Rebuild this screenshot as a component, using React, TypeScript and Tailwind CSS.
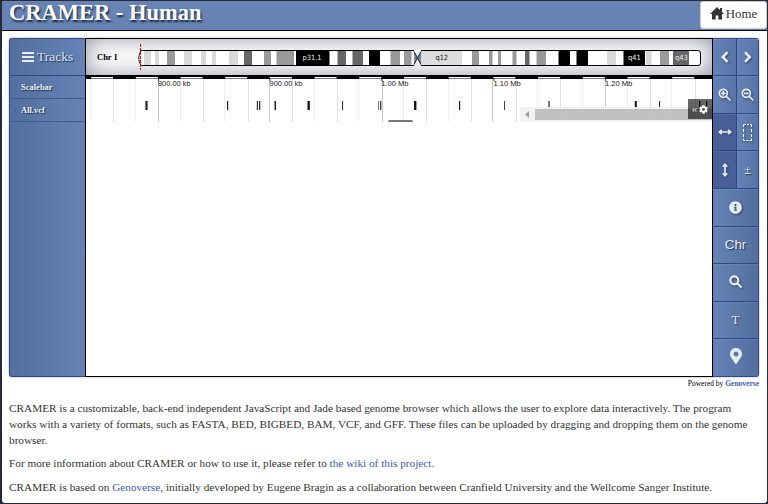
import React from "react";
import { FaInfoCircle, FaMapMarkerAlt, FaCog } from "react-icons/fa";

const SANS = '"Liberation Sans", Arial, sans-serif';

// Ideogram bands: start, end, stain colour
const bands: [number, number, string][] = [
  [144, 151, "#d9d9d9"], [155, 159, "#d9d9d9"], [167, 175, "#999"], [184, 192, "#d9d9d9"],
  [201, 206, "#d9d9d9"], [212, 216, "#d9d9d9"], [229, 238, "#d9d9d9"], [244, 252, "#666"],
  [264, 271, "#999"], [276.5, 294, "#999"], [296, 329.5, "#000"], [337.5, 346, "#666"],
  [352.5, 363, "#666"], [369, 380, "#000"], [390.5, 400, "#999"], [404, 411.5, "#999"],
  [421, 462, "#ddd"], [472, 479, "#999"], [489, 492.5, "#999"], [498, 501, "#999"],
  [512.5, 516.5, "#999"], [525, 529.5, "#666"], [536.5, 546, "#999"], [558.5, 570, "#000"],
  [576.5, 588, "#000"], [607, 616, "#d9d9d9"], [623.5, 645, "#000"], [646, 651.5, "#d9d9d9"],
  [660, 669, "#999"], [673, 689, "#666"],
];

// Variants: position, width, colour
const variants: [number, number, string][] = [
  [145.4, 2.2, "#222"], [227, 1.2, "#222"], [256.8, 1.2, "#333"], [259, 1.3, "#333"], [274.5, 1.5, "#222"],
  [307.5, 2.3, "#111"], [342, 1.1, "#333"], [378, 1, "#777"], [380, 1.4, "#444"], [414, 2.4, "#111"],
  [459, 1.2, "#222"], [504, 1, "#444"], [548.4, 1.3, "#333"], [634.8, 2, "#111"], [659, 1.1, "#333"],
  [699, 1.4, "#111"], [706, 1.2, "#111"],
];

const STEP = 22.35;
const lines = Array.from({ length: 28 }, (_, i) => 91.1 + i * STEP);
const labels: [number, string, number][] = [
  [158, "800.00 kb", 32.5], [269.5, "900.00 kb", 32.8], [381.2, "1.00 Mb", 27.3], [493.5, "1.10 Mb", 27.3], [605, "1.20 Mb", 27.3],
];

function Ideogram() {
  return (
    <svg width="626" height="36" viewBox="86 39 626 36" className="block" style={{ fontFamily: '"DejaVu Sans", sans-serif' }}>
      <path d="M141 51H414L417.5 58L414 65H141Q136.500 58 141 51Z" fill="#fff" />
      <path d="M421 51H698Q700.500 51 700.500 54V62Q700.500 65 698 65H421L417.500 58Z" fill="#fff" />
      {bands.map(([a, b, c]) => <rect key={a} x={a} y="51" width={b - a} height="14" fill={c} />)}
      <path d="M414 51L417.500 57.500L421 51V65L417.500 58.500L414 65Z" fill="#708aac" />
      <path d="M141 50.5H414M141 65.500H414M421 50.500H698Q700.500 50.500 700.500 53V63Q700.500 65.500 698 65.500H421" fill="none" stroke="#000" />
      <path d="M141 50.500Q136.500 58 141 65.500M414 51.500L421 64.500M421 51.500L414 64.500" fill="none" stroke="#222" />
      <path d="M140.500 44V70" stroke="#f00" strokeWidth="1" strokeDasharray="3 1" />
      <text x="97" y="60" fontSize="8.500" fontWeight="bold" style={{ fontFamily: '"Liberation Serif", serif' }}>Chr 1</text>
      <g fontSize="7.200" fill="#eee" lengthAdjust="spacingAndGlyphs">
        <text x="302.500" y="60" textLength="19" lengthAdjust="spacingAndGlyphs">p31.1</text>
        <text x="435.500" y="60" fill="#111" textLength="12.500" lengthAdjust="spacingAndGlyphs">q12</text>
        <text x="628" y="60" textLength="12.800" lengthAdjust="spacingAndGlyphs">q41</text>
        <text x="675" y="60" textLength="12.800" lengthAdjust="spacingAndGlyphs">q43</text>
      </g>
    </svg>
  );
}

function Tracks() {
  return (
    <svg width="626" height="47" viewBox="86 75 626 47" className="block" style={{ fontFamily: SANS }}>
      <rect x="86" y="75" width="626" height="47" fill="#fff" />
      {lines.map((x, i) => (
        <rect key={x} x={Math.round(x) - (i % 2 ? 0 : 1)} y="79" width="1" height="43" fill={i % 5 === 3 ? "#c8c8c8" : i % 2 ? "#e1e1e1" : "#eee"} />
      ))}
      <rect x="86" y="75" width="626" height="4" fill="#000" />
      {lines.filter((_, i) => i % 2 === 0).map((x) => (
        <g key={x}>
          <rect x={x} y="77" width="22" height="1" fill="#fff" />
          <rect x={x} y="78" width="22" height="1" fill="#777" />
        </g>
      ))}
      {labels.map(([x, t, w]) => (
        <g key={t}>
          <path d={`M${x + 0.5} 79V81`} stroke="#333" />
          <text x={x} y="86" fontSize="8" fill="#222" textLength={w} lengthAdjust="spacingAndGlyphs">{t}</text>
        </g>
      ))}
      {variants.map(([x, w, c]) => <rect key={x} x={x} y="101" width={w} height="9" fill={c} />)}
      <rect x="388" y="120" width="25" height="4" rx="1.500" fill="#777" />
      <g opacity=".93">
        <rect x="520" y="107" width="192" height="15" fill="#f1f1f1" />
        <rect x="535" y="109" width="177" height="11" fill="#bdbdbd" />
        <path d="M529 111V118L525 114.500Z" fill="#999" />
      </g>
    </svg>
  );
}

function Stroke({ d, w = 2, size = 14 }: { d: string; w?: number; size?: number }) {
  return (
    <svg width={size} height={size} viewBox="0 0 14 14" fill="none" stroke="currentColor" strokeWidth={w}>
      <path d={d} />
    </svg>
  );
}

function Btn({ children, col, on, h = "h-[37.500px]" }: { children: React.ReactNode; col?: "left" | "right"; on?: boolean; h?: string }) {
  const width = col === "left" ? "w-[24px]" : col === "right" ? "w-[22px]" : "w-full";
  return (
    <div
      className={`flex ${h} ${width} items-center justify-center border-r border-b border-[#304789] ${
        on ? "bg-[#485f98]" : col ? "bg-linear-to-r from-[#6482b5] to-[#5875a8]" : "bg-linear-to-r from-[#6583b5] to-[#526f9e]"
      } text-[#e5ebf5] shadow-[inset_0_1px_0_rgba(255,255,255,0.08)] [text-shadow:1px_1px_1px_#28364f] [&>svg]:shrink-0 [&>svg]:drop-shadow-[1px_1px_1px_#34486d]`}
    >
      {children}
    </div>
  );
}

const magnifier = "M9.300 5.300A4 4 0 1 1 1.300 5.300A4 4 0 1 1 9.300 5.300M8.300 8.300L12.500 12.500";

function Controls() {
  return (
    <div className="w-[46px] shrink-0 overflow-hidden rounded-r-[3px] border-t border-[#304789]">
      <div className="flex">
        <Btn col="left" h="h-[37px]"><Stroke d="M9.500 2.200L4.800 7L9.500 11.800" w={2.6} /></Btn>
        <Btn col="right" h="h-[37px]"><Stroke d="M4 2.200L8.700 7L4 11.800" w={2.6} /></Btn>
      </div>
      <div className="flex">
        <Btn col="left" h="h-[38px]"><Stroke d={magnifier + "M3 5.300H7.600M5.300 3V7.600"} w={1.7} /></Btn>
        <Btn col="right" h="h-[38px]"><Stroke d={magnifier + "M3 5.300H7.600"} w={1.7} /></Btn>
      </div>
      <div className="flex">
        <Btn col="left" on h="h-[37px]"><Stroke d="M1.500 7H12.500M3.800 4.800L1.300 7L3.800 9.200M10.200 4.800L12.700 7L10.200 9.200" w={1.7} /></Btn>
        <Btn col="right" h="h-[37px]">
          <svg width="9" height="17" viewBox="0 0 9 17" fill="none" stroke="#fff" strokeWidth="1">
            <path d="M0.500 3V0.500H3M4 0.500H6M7 0.500H8.500V3M0.500 5V8M8.500 5V8M0.500 10V13M8.500 10V13M0.500 14.500V16.500H2M3 16.500H5.500M6.500 16.500H8.500V14.500" />
          </svg>
        </Btn>
      </div>
      <div className="flex">
        <Btn col="left" on h="h-[38px]"><Stroke d="M7 1.500V12.500M4.800 3.800L7 1.300L9.200 3.800M4.800 10.200L7 12.700L9.200 10.200" w={1.7} /></Btn>
        <Btn col="right" h="h-[38px]"><span className="text-[13px]">±</span></Btn>
      </div>
      <Btn><FaInfoCircle size={13} /></Btn>
      <Btn><span className="text-[13.300px]" style={{ fontFamily: SANS }}>Chr</span></Btn>
      <Btn>
        <Stroke d={magnifier} w={2.2} />
      </Btn>
      <Btn><span className="text-[13px]">T</span></Btn>
      <Btn h="h-[38px]">
        <span className="-mt-1">
          <FaMapMarkerAlt size={16} />
        </span>
      </Btn>
    </div>
  );
}

export default function App() {
  return (
    <div
      className="h-[504px] w-[768px] overflow-hidden bg-[#292a39] pt-px pr-px pb-px pl-[2px] text-[#333]"
      style={{ fontFamily: '"Liberation Serif", "Times New Roman", serif' }}
    >
      <div className="flex h-[502px] flex-col overflow-hidden rounded-[3px] bg-white">
        <header className="flex h-[30px] shrink-0 justify-between border-b border-black bg-[#6683b4] pl-[7px]">
          <h1 className="text-[22.500px] leading-[24px] font-bold whitespace-nowrap text-white [text-shadow:1px_2px_2px_#17253d]">
            CRAMER - Human
          </h1>
          <a className="flex h-[28px] w-[67px] items-center justify-center gap-[2px] rounded-[3px] border border-[#ccc] bg-white text-[12.800px] text-[#333]">
            <svg width="14" height="13" viewBox="0 0 14 13" fill="#333" className="-mt-[3px]">
              <path d="M7 0L14 7H12V12.500H8.300V8.500H5.700V12.500H2V7H0ZM10 1H12V5H10Z" />
            </svg>
            Home
          </a>
        </header>
        <main className="flex flex-col px-[7px] pt-[7px]">
          <section className="flex h-[339px] w-[750px] rounded-[3px] shadow-[0_0_2px_#999]">
            <aside className="w-[76px] shrink-0 rounded-l-[3px] border border-r-0 border-[#304789] bg-linear-to-r from-[#526f9e] to-[#6583b5] text-[#eef1f7] [text-shadow:1px_1px_1px_#1d2b47]">
              <div className="flex h-[37px] items-center border-b border-[#304789] pt-px pl-[12px] text-[13.500px] text-[#dce4f0]">
                <svg width="12" height="11" viewBox="0 0 12 11" stroke="#e8edf5" strokeWidth="2" className="mr-[3px]">
                  <path d="M0 1H12M0 5H12M0 9H12" />
                </svg>
                Tracks
              </div>
              <div className="flex h-[23px] items-center border-b border-[#405b90] pl-[11px] text-[8.500px] font-bold">Scalebar</div>
              <div className="flex h-[23px] items-center border-b border-[#405b90] text-[8.500px] font-bold">
                <svg width="11" height="10" viewBox="0 0 11 10" stroke="#3c5175" strokeWidth="1" strokeDasharray="1.500 1.500" fill="none">
                  <path d="M2 1L6 5L2 9" />
                </svg>
                All.vcf
              </div>
            </aside>
            <div className="relative w-[628px] shrink-0 border border-black bg-white">
              <div className="bg-white shadow-[inset_0_0_22px_#9292a6]">
                <Ideogram />
              </div>
              <Tracks />
              <div className="absolute top-[60px] right-0 flex h-[20px] w-[24px] items-center justify-center gap-[2px] bg-black/60 text-[11px] text-[#ddd]">
                <span className="-mt-0.5">«</span>
                <FaCog size={9} color="#fff" />
              </div>
            </div>
            <Controls />
          </section>
          <div className="mt-[2px] pr-px text-right text-[7.500px] leading-[9px] text-black">
            Powered by <b className="text-[#405bb5]">Genoverse</b>
          </div>
          <div className="mt-[12px] flex flex-col text-[11.250px] leading-[16px] whitespace-nowrap">
            <p>
              CRAMER is a customizable, back-end independent JavaScript and Jade based genome browser which allows the user to explore data interactively. The program<br />
              works with a variety of formats, such as FASTA, BED, BIGBED, BAM, VCF, and GFF. These files can be uploaded by dragging and dropping them on the genome<br />
              browser.
            </p>
            <p className="mt-[7px]">For more information about CRAMER or how to use it, please refer to <a className="text-[#405bb5]">the wiki of this project.</a></p>
            <p className="mt-2">CRAMER is based on <a className="text-[#405bb5]">Genoverse</a>, initially developed by Eugene Bragin as a collaboration between Cranfield University and the Wellcome Sanger Institute.</p>
          </div>
        </main>
      </div>
    </div>
  );
}
